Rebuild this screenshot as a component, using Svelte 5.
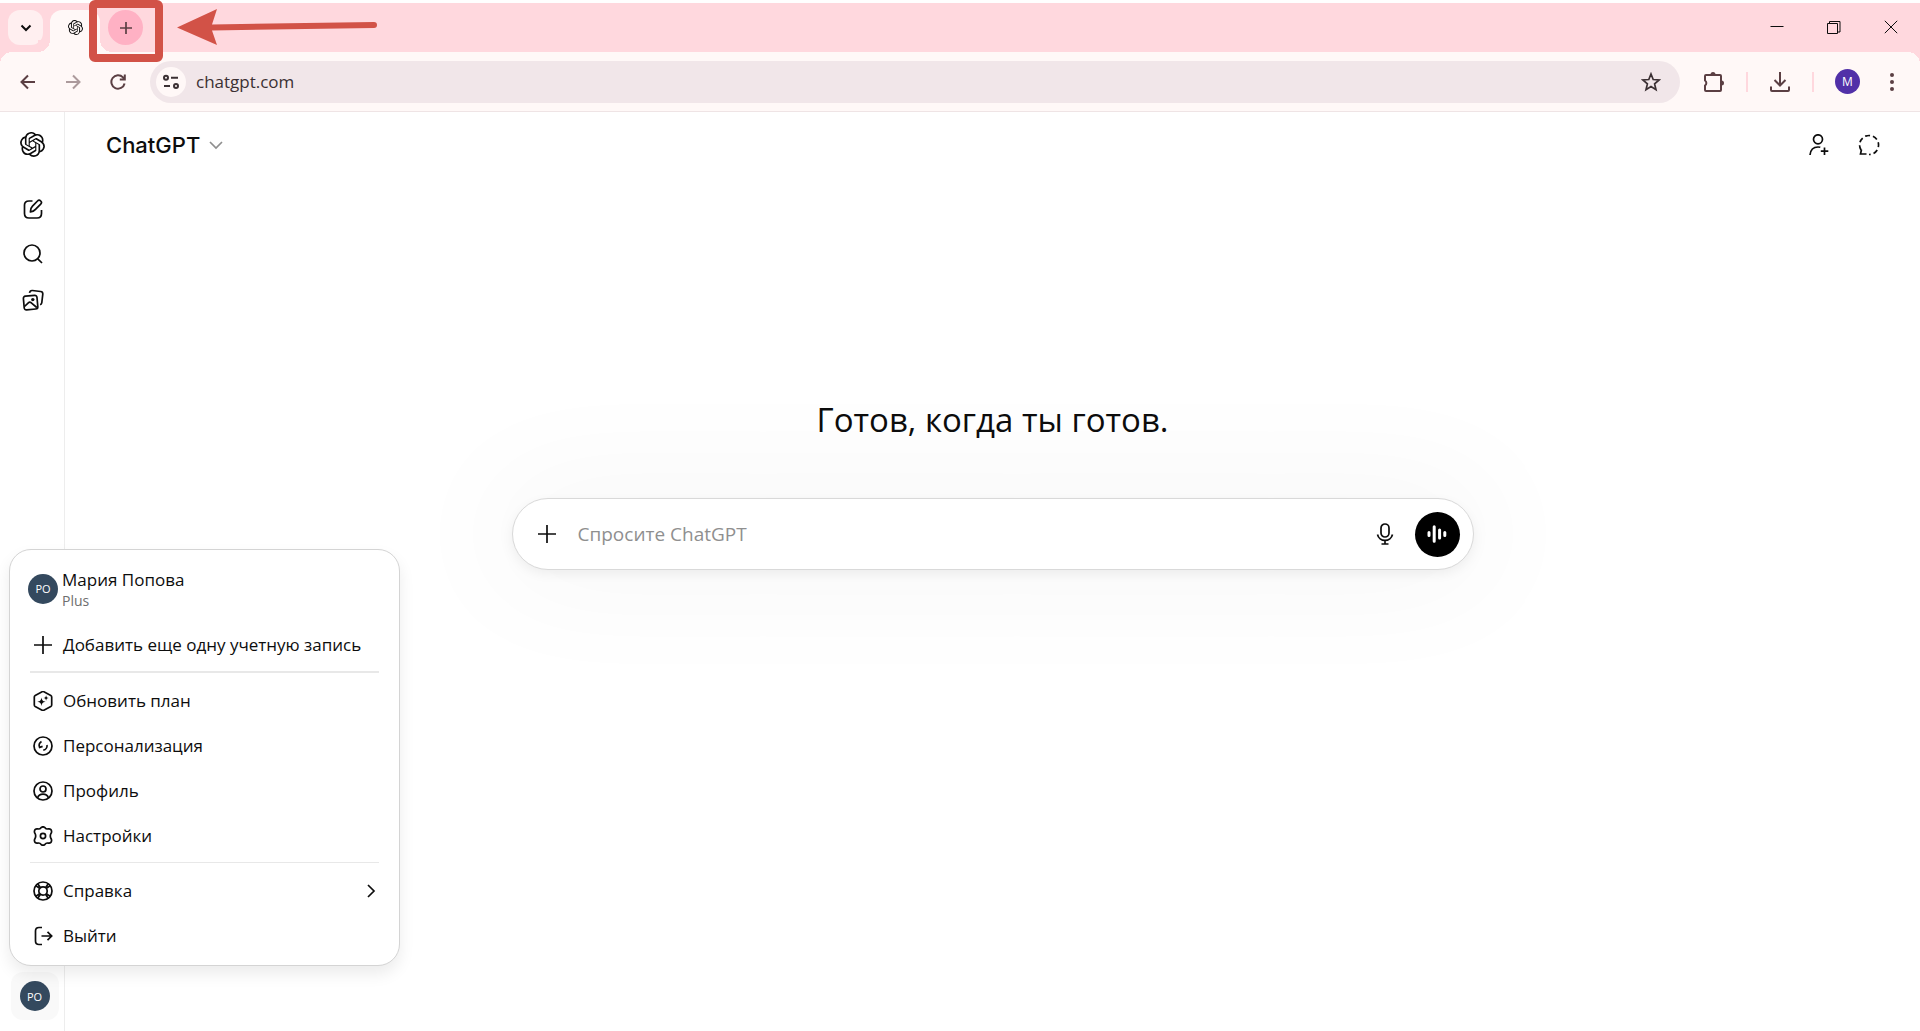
<script>
  const logo = 'M22.2819 9.8211a5.9847 5.9847 0 0 0-.5157-4.9108 6.0462 6.0462 0 0 0-6.5098-2.9A6.0651 6.0651 0 0 0 4.9807 4.1818a5.9847 5.9847 0 0 0-3.9977 2.9 6.0462 6.0462 0 0 0 .7427 7.0966 5.98 5.98 0 0 0 .511 4.9107 6.051 6.051 0 0 0 6.5146 2.9001A5.9847 5.9847 0 0 0 13.2599 24a6.0557 6.0557 0 0 0 5.7718-4.2058 5.9894 5.9894 0 0 0 3.9977-2.9001 6.0557 6.0557 0 0 0-.7475-7.0729zm-9.022 12.6081a4.4755 4.4755 0 0 1-2.8764-1.0408l.1419-.0804 4.7783-2.7582a.7948.7948 0 0 0 .3927-.6813v-6.7369l2.02 1.1686a.071.071 0 0 1 .038.052v5.5826a4.504 4.504 0 0 1-4.4945 4.4944zm-9.6607-4.1254a4.4708 4.4708 0 0 1-.5346-3.0137l.142.0852 4.783 2.7582a.7712.7712 0 0 0 .7806 0l5.8428-3.3685v2.3324a.0804.0804 0 0 1-.0332.0615L9.74 19.9502a4.4992 4.4992 0 0 1-6.1408-1.6464zM2.3408 7.8956a4.485 4.485 0 0 1 2.3655-1.9728V11.6a.7664.7664 0 0 0 .3879.6765l5.8144 3.3543-2.0201 1.1685a.0757.0757 0 0 1-.071 0l-4.8303-2.7865A4.504 4.504 0 0 1 2.3408 7.872zm16.5963 3.8558L13.1038 8.364 15.1192 7.2a.0757.0757 0 0 1 .071 0l4.8303 2.7913a4.4944 4.4944 0 0 1-.6765 8.1042v-5.6772a.79.79 0 0 0-.407-.667zm2.0107-3.0231l-.142-.0852-4.7735-2.7818a.7759.7759 0 0 0-.7854 0L9.409 9.2297V6.8974a.0662.0662 0 0 1 .0284-.0615l4.8303-2.7866a4.4992 4.4992 0 0 1 6.6802 4.66zM8.3065 12.863l-2.02-1.1638a.0804.0804 0 0 1-.038-.0567V6.0742a4.4992 4.4992 0 0 1 7.3757-3.4537l-.142.0805L8.704 5.459a.7948.7948 0 0 0-.3927.6813zm1.0976-2.3654l2.602-1.4998 2.6069 1.4998v2.9994l-2.5974 1.4997-2.6067-1.4997Z';

  let address = $state('chatgpt.com');
  let prompt = $state('');

  const planItems = [
    { id: 'plan', label: 'Обновить план' },
    { id: 'personal', label: 'Персонализация' },
    { id: 'profile', label: 'Профиль' },
    { id: 'settings', label: 'Настройки' }
  ];
  const helpItems = [
    { id: 'help', label: 'Справка', more: true },
    { id: 'logout', label: 'Выйти' }
  ];
</script>

{#snippet menuItem(item)}
  <button class="item">
    <svg class="line" viewBox="0 0 20 20" width="20" height="20">
      {#if item.id === 'plan'}
        <path d="M10 .3l7.8 4.1q.9.5.9 1.5v8.200q0 1-.9 1.500L10 19.700l-7.800-4.100q-.9-.5-.9-1.500V5.900q0-1 .9-1.500z" />
        <path class="fill" d="M8.500 6.500c.6 3 1.200 3.600 4.200 4.200-3 .6-3.600 1.200-4.200 4.200-.6-3-1.200-3.600-4.200-4.200 3-.6 3.600-1.200 4.200-4.200zM13.100 4.300c.4 1.900.8 2.300 2.700 2.700-1.900.4-2.300.8-2.700 2.700-.4-1.900-.8-2.300-2.700-2.700 1.900-.4 2.300-.8 2.700-2.700z" />
      {:else if item.id === 'personal'}
        <circle cx="10" cy="10" r="9" />
        <path d="M8.500 5.500a4.800 4.800 0 0 0-1.900 5.900l3-1M14 9a4.600 4.600 0 0 1-3.700 5.200" />
      {:else if item.id === 'profile'}
        <circle cx="10" cy="10" r="9" />
        <circle cx="10" cy="8" r="3" />
        <path d="M4.500 16.800c1-2.400 3-3.600 5.500-3.600s4.500 1.200 5.500 3.600" />
      {:else if item.id === 'settings'}
        <path d="M8 1.700q2-1.900 4 0 1.200 1.700 3.100 1.200 2.900-.5 3.400 2 .3 1.500-.5 2.500-1.400 2.600 0 5.200.8 1 .5 2.500-.5 2.500-3.400 2-1.900-.5-3.100 1.200-2 1.900-4 0-1.200-1.700-3.100-1.200-2.900.5-3.400-2-.3-1.500.5-2.500 1.400-2.600 0-5.200-.8-1-.5-2.500.5-2.500 3.400-2 1.900.5 3.100-1.200z" />
        <circle cx="10" cy="10" r="2.6" />
      {:else if item.id === 'help'}
        <circle cx="10" cy="10" r="9" />
        <circle cx="10" cy="10" r="4.2" />
        <path d="M2.600 4.600l4 2.700M4.600 2.600l2.700 4M17.400 4.600l-4 2.700M15.400 2.600l-2.700 4M2.600 15.400l4-2.700M4.600 17.400l2.700-4M17.400 15.400l-4-2.700M15.400 17.400l-2.700-4" />
      {:else}
        <path d="M9 1.500H6q-3.500 0-3.500 3.500v10q0 3.500 3.500 3.500h3M8.500 10h10M14.500 5.800l4.200 4.200-4.200 4.200" />
      {/if}
    </svg>
    <span>{item.label}</span>
    {#if item.more}
      <svg class="line chevron" viewBox="0 0 14 14" width="14" height="14"><path d="M4 1l6 6-6 6" /></svg>
    {/if}
  </button>
{/snippet}

<div class="window">
  <header class="tabs">
    <button class="tab-search" aria-label="Поиск вкладок">
      <svg class="line" viewBox="0 0 12 12" width="12" height="12"><path stroke-width="2" d="M1.500 3.500L6 8l4.500-4.500" /></svg>
    </button>
    <div class="tab">
      <svg viewBox="0 0 24 24" width="15" height="15"><path d={logo} /></svg>
    </div>
    <button class="new-tab" aria-label="Новая вкладка">
      <svg class="line" viewBox="0 0 14 14" width="14" height="14"><path d="M7 1v12M1 7h12" /></svg>
    </button>
    <div class="controls">
      <button aria-label="Свернуть"><svg class="line thin" viewBox="0 0 14 14" width="14" height="14"><path d="M.5 6.500h13" /></svg></button>
      <button aria-label="Развернуть"><svg class="line thin" viewBox="0 0 14 14" width="14" height="14"><path d="M.5 3.500h10v10H.5zM2.500 3V1.500h10.500v10.500h-2" /></svg></button>
      <button aria-label="Закрыть"><svg class="line thin" viewBox="0 0 14 14" width="14" height="14"><path d="M.8.8l12.400 12.400M13.200.8L.8 13.200" /></svg></button>
    </div>
    <!-- callout pointing at the new tab button -->
    <svg class="callout" viewBox="0 0 380 62" width="380" height="62">
      <rect x="93" y="4" width="66" height="54" rx="2" fill="none" stroke="#d25247" stroke-width="8" />
      <path d="M177 27.500L217 9l-5 15.500 162-2.500a3 3 0 0 1 0 6l-162 2.500 5 14.500z" fill="#d25247" />
    </svg>
  </header>

  <div class="toolbar">
    <button aria-label="Назад"><svg class="line heavy" viewBox="0 0 16 16" width="16" height="16"><path d="M15 8H2M8 1.500L1.500 8 8 14.500" /></svg></button>
    <button class="off" aria-label="Вперёд"><svg class="line heavy" viewBox="0 0 16 16" width="16" height="16"><path d="M1 8h13M8 1.500L14.500 8 8 14.500" /></svg></button>
    <button aria-label="Обновить"><svg class="line heavy" viewBox="0 0 16 16" width="16" height="16"><path d="M14.600 9.500A6.700 6.700 0 1 1 13 3.400L14.500 5M14.800.5v5h-5" /></svg></button>
    <div class="address">
      <span class="site">
        <svg class="line heavy" viewBox="0 0 16 16" width="16" height="16"><circle cx="3" cy="3.7" r="2" /><path d="M8 3.700h7M1 12h6" /><circle cx="13" cy="12" r="2" /></svg>
      </span>
      <input type="text" aria-label="Адресная строка" bind:value={address} />
      <button aria-label="Добавить в закладки"><svg class="line" viewBox="0 0 20 20" width="20" height="20"><path d="M10 2l2.200 5.500 5.900.5-4.500 3.900 1.400 5.800-5-3.100-5 3.100 1.400-5.800L1.900 8l5.900-.5z" /></svg></button>
    </div>
    <div class="tools">
      <button aria-label="Расширения"><svg class="line heavy" viewBox="0 0 22 22" width="22" height="22"><path d="M3 4h14q1 0 1 1v14q0 1-1 1H3q-1 0-1-1v-4.500a3 3 0 0 0 0-5V5q0-1 1-1z" /><path class="fill" d="M7.500 3.500a2.500 2.500 0 0 1 5 0zM18.500 9.500a2.500 2.500 0 0 1 0 5z" /></svg></button>
      <i></i>
      <button aria-label="Загрузки"><svg class="line heavy" viewBox="0 0 22 22" width="22" height="22"><path d="M11 1v13M5.500 9l5.500 5.500L16.500 9M2 15.500V19q0 1 1 1h16q1 0 1-1v-3.500" /></svg></button>
      <i></i>
      <button class="me" aria-label="Профиль браузера">M</button>
      <button class="more" aria-label="Меню браузера"><svg viewBox="0 0 4 18" width="4" height="18"><circle cx="2" cy="2" r="2" /><circle cx="2" cy="9" r="2" /><circle cx="2" cy="16" r="2" /></svg></button>
    </div>
  </div>

  <div class="page">
    <aside>
      <a href="#home" aria-label="ChatGPT"><svg viewBox="0 0 24 24" width="25" height="25"><path d={logo} /></svg></a>
      <nav>
        <a href="#new" aria-label="Новый чат"><svg class="line" viewBox="0 0 20 20" width="20" height="20"><path d="M9.500 2H6Q1.500 2 1.500 6v8.500Q1.500 19 6 19h8q4.500 0 4.500-4.500V11" /><path d="M7.500 12.800q-.2-3.400 2-5.600l5-5.200a2.200 2.200 0 0 1 3.200 3.200l-5.200 5.200q-2 2.200-5 2.400z" /></svg></a>
        <a href="#search" aria-label="Поиск"><svg class="line" viewBox="0 0 20 20" width="20" height="20"><circle cx="9" cy="9" r="8" /><path d="M14.800 14.800L19 19" /></svg></a>
        <a href="#library" aria-label="Библиотека"><svg class="line" viewBox="0 0 22 22" width="22" height="22"><path d="M3.500 7.200l9-.8q2.300-.2 2.500 2.100l.8 9q.2 2.300-2.100 2.500l-9 .8q-2.300.2-2.500-2.100l-.8-9q-.2-2.300 2.100-2.500zM7.500 3.800Q8 1.300 10.400 1.500l8.200 1q2.400.3 2.200 2.600l-1 8.500q-.2 1.700-1.700 2.200" /><path d="M2.500 17.500l3.800-3.700q1.400-1.200 3 0l5.500 4.700" /><circle class="fill" cx="10.800" cy="10.600" r="1.700" /></svg></a>
      </nav>
      <button class="account" aria-label="Аккаунт"><span class="avatar">PO</span></button>
    </aside>

    <main>
      <div class="top">
        <button class="model">ChatGPT <svg class="line" viewBox="0 0 14 14" width="14" height="14"><path d="M1 4l6 6 6-6" /></svg></button>
        <div class="actions">
          <button aria-label="Пригласить"><svg class="line" viewBox="0 0 22 22" width="22" height="22"><circle cx="10" cy="5.3" r="4.5" /><path d="M2 21c.5-5.300 3.500-8 8-8q1.200 0 2.300.3M16.500 13.500v7.500M12.800 17.200h7.500" /></svg></button>
          <button aria-label="Временный чат"><svg class="line" viewBox="0 0 22 22" width="22" height="22"><path stroke-dasharray="5 3" d="M3 16A9.500 9.500 0 1 1 11 20.500" /><path d="M3.500 15.500l-1 4.500h6" /></svg></button>
        </div>
      </div>

      <section>
        <h1>Готов, когда ты готов.</h1>
        <form class="composer" onsubmit={(e) => e.preventDefault()}>
          <button type="button" aria-label="Добавить файл"><svg class="line" viewBox="0 0 18 18" width="18" height="18"><path d="M9 0v18M0 9h18" /></svg></button>
          <input type="text" aria-label="Сообщение" placeholder="Спросите ChatGPT" bind:value={prompt} />
          <button type="button" aria-label="Диктовка"><svg class="line" viewBox="0 0 18 22" width="18" height="22"><rect x="5" y="1" width="8" height="13" rx="4" /><path d="M1.500 11.500a7.700 7.700 0 0 0 15 0M9 17.300V21M5.500 21h7" /></svg></button>
          <button type="button" class="voice" aria-label="Голосовой режим"><svg class="line" viewBox="0 0 20 20" width="20" height="20"><path class="bars" d="M2 8.500v3M7.200 2.800v14.400M12.600 6v8M17.800 8.500v3" /></svg></button>
        </form>
      </section>
    </main>

    <div class="menu">
      <button class="user">
        <span class="avatar">PO</span>
        <span class="name">Мария Попова<small>Plus</small></span>
      </button>
      <button class="item">
        <svg class="line" viewBox="0 0 20 20" width="20" height="20"><path d="M10 1v18M1 10h18" /></svg>
        <span>Добавить еще одну учетную запись</span>
      </button>
      <hr />
      {#each planItems as item (item.id)}
        {@render menuItem(item)}
      {/each}
      <hr class="fine" />
      {#each helpItems as item (item.id)}
        {@render menuItem(item)}
      {/each}
    </div>
  </div>
</div>

<style>
  :global(body) {
    margin: 0;
    background: #fff;
    color: #0d0d0d;
    font-family: 'Open Sans', 'Noto Sans', sans-serif;
  }

  * {
    box-sizing: border-box;
  }

  button {
    display: flex;
    align-items: center;
    justify-content: center;
    padding: 0;
    border: 0;
    background: none;
    color: inherit;
    font: inherit;
  }

  input {
    flex: 1;
    min-width: 0;
    padding: 0;
    border: 0;
    outline: 0;
    background: none;
    color: inherit;
    font: inherit;
  }

  svg {
    display: block;
    flex: none;
    fill: currentColor;
  }

  .line {
    fill: none;
    stroke: currentColor;
    stroke-width: 1.7;
  }

  .line .fill {
    fill: currentColor;
    stroke: none;
  }

  .thin {
    stroke-width: 1;
  }

  .heavy {
    stroke-width: 2;
  }

  .window {
    display: flex;
    flex-direction: column;
    min-height: 100vh;
  }

  /* browser frame */
  .tabs {
    position: relative;
    display: flex;
    align-items: flex-start;
    height: 52px;
    padding: 7px 0 0 8px;
    border-top: 3px solid #fff;
    background: #ffd8de;
  }

  .tab-search {
    width: 35px;
    height: 35px;
    margin-right: 7px;
    border-radius: 12px;
    background: #ffeff0;
  }

  .tab {
    position: relative;
    display: flex;
    align-items: center;
    justify-content: center;
    width: 50px;
    height: 42px;
    padding-bottom: 7px;
    border-radius: 12px 12px 0 0;
    background: #fff8f7;
  }

  .tab::before,
  .tab::after {
    content: '';
    position: absolute;
    bottom: 0;
    width: 12px;
    height: 12px;
  }

  .tab::before {
    right: 100%;
    background: radial-gradient(circle at 0 0, #ffd8de 12px, #fff8f7 12px);
  }

  .tab::after {
    left: 100%;
    background: radial-gradient(circle at 100% 0, #ffd8de 12px, #fff8f7 12px);
  }

  .new-tab {
    width: 35px;
    height: 35px;
    margin-left: 8px;
    border-radius: 50%;
    background: #ffb1c4;
    color: #5b3f43;
  }

  .controls {
    display: flex;
    gap: 43px;
    margin: 10px 22px 0 auto;
  }

  .callout {
    position: absolute;
    top: -3px;
    left: 0;
    z-index: 1;
  }

  .toolbar {
    display: flex;
    align-items: center;
    height: 60px;
    padding: 0 26px 0 20px;
    border-bottom: 1px solid #efe4e5;
    background:
      radial-gradient(circle at 12px 12px, #fff8f7 12px, #ffd8de 12px) 0 0 / 12px 12px no-repeat,
      radial-gradient(circle at 0 12px, #fff8f7 12px, #ffd8de 12px) 100% 0 / 12px 12px no-repeat,
      #fff8f7;
    color: #5b3f43;
  }

  .toolbar > button {
    margin-right: 29px;
  }

  .toolbar > .off {
    opacity: 0.5;
  }

  .address {
    display: flex;
    flex: 1;
    align-items: center;
    height: 42px;
    margin-left: -5px;
    padding: 0 19px 0 6px;
    border-radius: 21px;
    background: #f1e6e9;
    color: #3b3033;
    font-size: 17px;
  }

  .site {
    display: flex;
    align-items: center;
    justify-content: center;
    width: 30px;
    height: 30px;
    margin-right: 10px;
    border-radius: 50%;
    background: #fff8f7;
  }

  .tools {
    display: flex;
    align-items: center;
    gap: 21px;
    padding-left: 23px;
  }

  .tools i {
    width: 2px;
    height: 20px;
    background: #ffd8de;
  }

  .me {
    width: 25px;
    height: 25px;
    border-radius: 50%;
    background: #5130a8;
    color: #fff;
    font-size: 12px;
  }

  .more {
    margin-left: 9px;
  }

  /* chat page */
  .page {
    position: relative;
    display: flex;
    flex: 1;
  }

  aside {
    display: flex;
    flex-direction: column;
    align-items: center;
    width: 65px;
    padding: 20px 0 11px 1px;
    border-right: 1px solid #ededed;
  }

  aside a {
    color: inherit;
  }

  nav {
    display: flex;
    flex-direction: column;
    align-items: center;
    gap: 25px;
    margin-top: 42px;
  }

  .account {
    width: 48px;
    height: 48px;
    margin-top: auto;
    margin-left: 4px;
    border-radius: 12px;
    background: #f9f9f9;
  }

  .avatar {
    display: flex;
    flex: none;
    align-items: center;
    justify-content: center;
    width: 30px;
    height: 30px;
    border-radius: 50%;
    background: #34495e;
    color: #fff;
    font-size: 11px;
  }

  main {
    display: flex;
    flex: 1;
    flex-direction: column;
  }

  .top {
    display: flex;
    align-items: center;
    justify-content: space-between;
    height: 66px;
    padding: 0 40px 0 41px;
  }

  .model {
    gap: 9px;
    font-family: Inter, sans-serif;
    font-size: 22px;
    font-weight: 500;
  }

  .model svg {
    color: #8f8f8f;
  }

  .actions {
    display: flex;
    gap: 28px;
  }

  section {
    display: flex;
    flex-direction: column;
    align-items: center;
    padding-top: 218px;
  }

  h1 {
    margin: 0 0 54px;
    font-size: 33px;
    font-weight: 400;
    line-height: 48px;
  }

  .composer {
    display: flex;
    align-items: center;
    width: 100%;
    max-width: 962px;
    height: 72px;
    padding: 0 13px 0 25px;
    border: 1px solid #d9d9d9;
    border-radius: 36px;
    background: #fff;
    box-shadow: 0 4px 12px rgba(0, 0, 0, 0.06), 0 0 120px 26px rgba(0, 0, 0, 0.03);
    font-size: 19px;
  }

  .composer input {
    margin: 0 22px;
  }

  .composer input::placeholder {
    color: #8f8f8f;
    opacity: 1;
  }

  .composer .voice {
    width: 45px;
    height: 45px;
    margin-left: 21px;
    border-radius: 50%;
    background: #000;
    color: #fff;
  }

  .bars {
    stroke-width: 3;
    stroke-linecap: round;
  }

  .menu {
    position: absolute;
    bottom: 65px;
    left: 9px;
    width: 391px;
    padding: 9px 20px 7px;
    border: 1px solid #d4d4d4;
    border-radius: 22px;
    background: #fff;
    box-shadow: 0 8px 16px rgba(0, 0, 0, 0.08);
    font-size: 17px;
    line-height: 24px;
  }

  .menu button {
    width: 100%;
    justify-content: flex-start;
    text-align: left;
  }

  .menu .user {
    gap: 4px;
    height: 60px;
    margin: 0 0 3px -2px;
  }

  .name small {
    display: block;
    color: #6e6e6e;
    font-size: 14px;
    line-height: 18px;
  }

  .menu .item {
    gap: 10px;
    height: 45px;
    padding-left: 3px;
  }

  .item .chevron {
    margin: 0 1px 0 auto;
  }

  hr {
    height: 2px;
    margin: 4px 0 5px;
    border: 0;
    background: #e8e8e8;
  }

  .fine {
    height: 1px;
  }
</style>
